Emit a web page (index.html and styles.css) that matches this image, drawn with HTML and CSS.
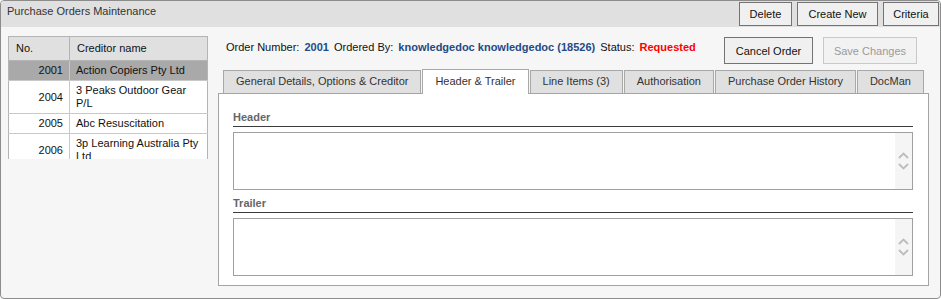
FILE: index.html
```html
<!DOCTYPE html>
<html>
<head>
<meta charset="utf-8">
<link rel="stylesheet" href="styles.css">
</head>
<body>
<div class="window">
  <div class="titlebar">
    <div class="title">Purchase Orders Maintenance</div>
    <div class="title-actions">
      <button class="btn btn-delete">Delete</button>
      <button class="btn btn-create">Create New</button>
      <button class="btn btn-criteria">Criteria</button>
    </div>
  </div>
  <div class="content">
    <div class="list">
      <table class="grid">
        <thead>
          <tr><th class="col-no">No.</th><th class="col-name">Creditor name</th></tr>
        </thead>
        <tbody>
          <tr class="selected"><td class="num">2001</td><td>Action Copiers Pty Ltd</td></tr>
          <tr><td class="num">2004</td><td>3 Peaks Outdoor Gear P/L</td></tr>
          <tr><td class="num">2005</td><td>Abc Resuscitation</td></tr>
          <tr><td class="num">2006</td><td>3p Learning Australia Pty Ltd</td></tr>
          <tr><td class="num">2007</td><td>Acme Supplies</td></tr>
        </tbody>
      </table>
    </div>
    <div class="detail">
      <div class="info">
        <div class="info-text">
          <span class="lbl">Order Number:</span>
          <span class="val">2001</span>
          <span class="lbl">Ordered By:</span>
          <span class="val">knowledgedoc knowledgedoc (18526)</span>
          <span class="lbl">Status:</span>
          <span class="status">Requested</span>
        </div>
        <div class="info-actions">
          <button class="btn btn-cancel">Cancel Order</button>
          <button class="btn btn-save" disabled>Save Changes</button>
        </div>
      </div>
      <div class="tabs">
        <div class="tab">General Details, Options &amp; Creditor</div>
        <div class="tab active">Header &amp; Trailer</div>
        <div class="tab">Line Items (3)</div>
        <div class="tab">Authorisation</div>
        <div class="tab">Purchase Order History</div>
        <div class="tab">DocMan</div>
      </div>
      <div class="panel">
        <div class="section-label">Header</div>
        <div class="textbox">
          <div class="textbox-area"></div>
          <div class="spin">
            <svg width="11" height="22" viewBox="0 0 11 22"><polyline points="1,8 5.5,3.5 10,8" fill="none" stroke="#bdbdbd" stroke-width="1.8"/><polyline points="1,14 5.5,18.5 10,14" fill="none" stroke="#bdbdbd" stroke-width="1.8"/></svg>
          </div>
        </div>
        <div class="section-label">Trailer</div>
        <div class="textbox">
          <div class="textbox-area"></div>
          <div class="spin">
            <svg width="11" height="22" viewBox="0 0 11 22"><polyline points="1,8 5.5,3.5 10,8" fill="none" stroke="#bdbdbd" stroke-width="1.8"/><polyline points="1,14 5.5,18.5 10,14" fill="none" stroke="#bdbdbd" stroke-width="1.8"/></svg>
          </div>
        </div>
      </div>
    </div>
  </div>
</div>
</body>
</html>
```
FILE: styles.css
```css
* { box-sizing: border-box; }
html, body {
  margin: 0;
  padding: 0;
  background: #ffffff;
}
body {
  font-family: "Liberation Sans", Arial, sans-serif;
  font-size: 11px;
  color: #222;
}
.window {
  width: 941px;
  height: 299px;
  border: 1px solid #8c8c8c;
  border-radius: 4px;
  background: #f6f6f6;
  display: flex;
  flex-direction: column;
  overflow: hidden;
}
.titlebar {
  height: 26px;
  background: #e0e0e0;
  display: flex;
  justify-content: space-between;
  align-items: flex-start;
  padding: 1px 1px 0 6px;
  flex: none;
}
.title {
  line-height: 14px;
  padding-top: 2px;
  color: #333;
}
.title-actions {
  display: flex;
  gap: 5px;
}
.btn {
  font-family: "Liberation Sans", Arial, sans-serif;
  font-size: 11px;
  color: #111;
  background: #f0f0f0;
  border: 1px solid #737373;
  border-radius: 0;
  padding: 0;
  margin: 0;
  text-align: center;
}
.title-actions .btn { height: 24px; }
.btn-delete { width: 53px; }
.btn-create { width: 81px; }
.btn-criteria { width: 56px; }

.content {
  flex: 1;
  display: flex;
  padding: 9px 11px 12px 7px;
  gap: 10px;
  min-height: 0;
}
.list {
  width: 200px;
  height: 123px;
  overflow: hidden;
  flex: none;
  background: #f6f6f6;
}
.grid {
  width: 200px;
  border-collapse: collapse;
  table-layout: fixed;
  background: #fff;
}
.grid th, .grid td {
  border: 1px solid #c8c8c8;
  font-weight: normal;
  text-align: left;
  vertical-align: middle;
  line-height: 13px;
  color: #111;
}
.grid th {
  background: #e0e0e0;
  height: 24px;
  padding: 0 7px;
  border-color: #b4b4b4;
}
.grid th.col-no { width: 61px; }
.grid td {
  padding: 3px 4px 3px 6px;
}
.grid td.num {
  text-align: right;
  padding-right: 6px;
}
.grid tr.selected td {
  background: #a9a9a9;
}
.grid thead tr th,
.grid tbody tr td:first-child { border-left-color: #b4b4b4; }
.grid tbody tr td:last-child { border-right-color: #b4b4b4; }

.detail {
  flex: 1;
  min-width: 0;
  display: flex;
  flex-direction: column;
}
.info {
  height: 28px;
  display: flex;
  align-items: flex-start;
  padding: 0 12px 0 8px;
  flex: none;
}
.info-text {
  line-height: 14px;
  padding-top: 4px;
  white-space: nowrap;
}
.info-text .lbl { color: #111; }
.info-text .val {
  color: #244a86;
  font-weight: bold;
  margin: 0 2px;
}
.info-text .status {
  color: #ff0000;
  font-weight: bold;
  margin-left: 2px;
}
.info-actions {
  margin-left: auto;
  display: flex;
  gap: 10px;
  padding-top: 1px;
}
.info-actions .btn { height: 27px; }
.btn-cancel { width: 89px; }
.btn-save {
  width: 94px;
  color: #9a9a9a;
  border-color: #c9c9c9;
  background: #f2f2f2;
}

.tabs {
  display: flex;
  align-items: flex-end;
  gap: 1px;
  padding-left: 5px;
  margin-top: 5px;
  height: 24px;
  flex: none;
}
.tab {
  height: 23px;
  line-height: 21px;
  padding: 0 12px;
  background: #e0e0e0;
  border: 1px solid #a8a8a8;
  border-bottom: none;
  color: #333;
  white-space: nowrap;
}
.tab.active {
  height: 25px;
  line-height: 23px;
  background: #fff;
  margin-bottom: -1px;
  position: relative;
  z-index: 1;
}
.panel {
  flex: 1;
  background: #fff;
  border: 1px solid #a4a4a4;
  padding: 16px 15px 0 14px;
}
.section-label {
  font-weight: bold;
  color: #666;
  line-height: 14px;
  padding-bottom: 2px;
  border-bottom: 1px solid #3c3c3c;
}
.textbox {
  margin-top: 5px;
  height: 58px;
  border: 1px solid #a0a0a0;
  display: flex;
  background: #fff;
}
.textbox + .section-label { margin-top: 6px; }
.textbox-area { flex: 1; }
.spin {
  width: 17px;
  background: #f5f5f5;
  display: flex;
  align-items: center;
  justify-content: center;
}
.spin svg { display: block; }
```
